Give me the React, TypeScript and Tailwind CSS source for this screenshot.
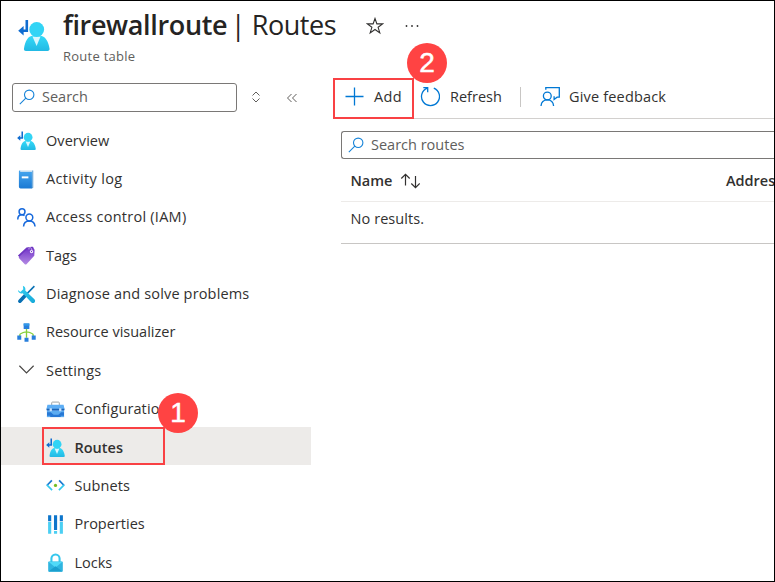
import React from "react";

type IconProps = { className?: string };

function RouteIcon({ className }: IconProps) {
  return (
    <svg viewBox="0 0 32 32" className={className} fill="none">
      <defs>
        <linearGradient id="person" x1="0" y1="0" x2="0" y2="1">
          <stop offset="0" stopColor="#35daf8" />
          <stop offset="1" stopColor="#22b9e4" />
        </linearGradient>
      </defs>
      <path d="M8.800 1v10.800H3.500" stroke="#0f6cd0" strokeWidth="2.600" />
      <path d="M5.600 7v9.600L.2 11.800z" fill="#0f6cd0" />
      <path d="M8 32a2 2 0 0 1-2-2.400C7 22 10 17 15 16.500h7c5 .5 8.500 5.500 9.500 13A2 2 0 0 1 29.500 32z" fill="url(#person)" />
      <path d="M14.500 17.500h8L18.600 27z" fill="#d8f7fe" />
      <circle cx="18.700" cy="10.500" r="7.400" fill="#32d4f5" />
    </svg>
  );
}

function SearchIcon({ className }: IconProps) {
  return (
    <svg viewBox="0 0 16 16" className={className} fill="none" stroke="#1683d8" strokeWidth="1.100">
      <circle cx="10.200" cy="5.800" r="4.700" />
      <path d="M6.800 9.200 .8 15.200" />
    </svg>
  );
}

function LogIcon() {
  return (
    <svg viewBox="0 0 20 20" className="size-[19px] shrink-0">
      <defs>
        <linearGradient id="book" x1="0" y1="0" x2="0" y2="1">
          <stop offset="0" stopColor="#46a6ef" />
          <stop offset="1" stopColor="#1b79d3" />
        </linearGradient>
      </defs>
      <path d="M3.500.500h13v18h-13z" fill="#c3dcf0" />
      <path d="M2.700.500h.8v1.700h12.200v17.300H3.800A1.800 1.800 0 0 1 2 17.700V1.500c0-.600.200-1 .7-1z" fill="url(#book)" />
      <path d="M16.600.500v18.200H15" stroke="#2f83c5" strokeWidth=".8" fill="none" />
      <path d="M5 6.700h7v2.100H5z" fill="#fff" />
    </svg>
  );
}

function PeopleIcon() {
  return (
    <svg viewBox="0 0 20 20" className="size-[19px] shrink-0" fill="none" stroke="#1769dc" strokeWidth="1.600">
      <circle cx="5.300" cy="4" r="3.100" />
      <path d="M.8 12c0-2.800 1.800-4.800 4.500-4.800 1 0 1.900.3 2.600.8" />
      <circle cx="13" cy="10" r="3.600" />
      <path d="M6.900 19.500c.2-3.500 2.700-5.800 6-5.800 3.400 0 5.800 2.300 6.100 5.800" />
    </svg>
  );
}

function TagIcon() {
  return (
    <svg viewBox="0 0 20 20" className="size-[19px] shrink-0">
      <defs>
        <linearGradient id="tag" x1="0" y1="0" x2="0" y2="1">
          <stop offset="0" stopColor="#7436c9" />
          <stop offset="1" stopColor="#b38ae3" />
        </linearGradient>
      </defs>
      <path d="m1 10 9-8.500 5.500-.7c1.300-.2 2.200.7 2 2L16 9l-8 9z" fill="#6e36c1" />
      <path d="m2.300 11.300 8.900-8.500 5.300-.2c1.300 0 2.100.8 2 2l-.3 5.600-8.200 8.900c-.6.600-1.200.6-1.800.1l-6-6.300c-.4-.5-.4-1.200.1-1.600z" fill="url(#tag)" />
      <circle cx="15.300" cy="5.800" r="1.700" fill="#fff" />
      <circle cx="15.300" cy="5.800" r=".7" fill="#7436c9" />
      <path d="M12.600 3.600c-.4-2.200 1.900-2.700 2.700-.5l.5 1.500" fill="none" stroke="#e2d3f7" strokeWidth=".8" />
    </svg>
  );
}

function ToolsIcon() {
  return (
    <svg viewBox="0 0 20 20" className="size-[19px] shrink-0" fill="none">
      <defs>
        <linearGradient id="wrench" x1="0" y1="0" x2="1" y2="1">
          <stop offset="0" stopColor="#37d2f2" />
          <stop offset="1" stopColor="#16a8d8" />
        </linearGradient>
      </defs>
      <path d="m18.300 1.200-8.500 8.700" stroke="#0870b4" strokeWidth="1.600" />
      <path d="M8.900 10.700 3 17" stroke="#0870b4" strokeWidth="3.800" strokeLinecap="round" />
      <path d="M6.200.8c2 .6 3.200 2.900 2.500 5l9.600 9.200c1 .9 1 2.400.1 3.300s-2.300.9-3.200 0L6 8.700C3.600 9.500 1.100 7.900 1 5.300l2.500 2 3.100-2.900z" fill="url(#wrench)" />
    </svg>
  );
}

function VisualizerIcon() {
  return (
    <svg viewBox="0 0 20 20" className="size-[19px] shrink-0">
      <path d="M10 6v9.500M3 14v-1.600c0-1.700 3-2.300 7-3.200 4 .9 7 1.500 7 3.200V14" fill="none" stroke="#86cf3b" strokeWidth="1.400" />
      <path d="M7 .5h6v5.800H7z" fill="#287fdc" />
      <path d="M.3 13.200h4.200v4.300H.3zM15.500 13.200h4.200v4.300h-4.200zM7.900 15.400h4.200v4.300H7.900z" fill="#287fdc" />
      <path d="M7 .5h6v2.300H7z" fill="#3399e9" />
    </svg>
  );
}

function ToolboxIcon() {
  return (
    <svg viewBox="0 0 20 20" className="size-[19px] shrink-0">
      <path d="M6 5.500V3c0-.500.300-.800.800-.800h6.400c.500 0 .800.300.800.800v2.500" fill="none" stroke="#9a9ea0" strokeWidth="1" />
      <path d="M1.500 5h17l1 4.500H.5z" fill="#5eaef5" />
      <path d="M.5 9.200h19v1.600H.5z" fill="#1b62b5" />
      <path d="M1 10.800h18V18H1z" fill="#2778d5" />
      <path d="M1 13h4l3 2.500h5l3-2.500h3v-1.500H1zM1 16.500h3.500V18H1zM15.500 16.500H19V18h-3.500z" fill="#5dacf1" />
      <path d="M3.800 8.700h2.400v3.200H3.800zM13.800 8.700h2.400v3.200h-2.400z" fill="#c5e2fc" />
    </svg>
  );
}

function SubnetsIcon() {
  return (
    <svg viewBox="0 0 20 20" className="size-[19px] shrink-0" fill="none" strokeWidth="1.800">
      <path d="M6.200 4.700.9 10" stroke="#1a79d0" />
      <path d="m.9 9.400 5.500 5.500" stroke="#35c9ef" />
      <path d="M13.800 4.700 19.100 10" stroke="#1a79d0" />
      <path d="m19.100 9.400-5.500 5.500" stroke="#35c9ef" />
      <circle cx="10" cy="9.900" r="1.700" fill="#76bd22" />
    </svg>
  );
}

function PropertiesIcon() {
  return (
    <svg viewBox="0 0 20 20" className="size-[19px] shrink-0">
      <path d="M2.200.300h3.300v6.200H2.200zM8.400.300h3.300v15.500H8.400zM14.500.300h3.300v6.200h-3.300z" fill="#0d75cb" />
      <path d="M2.200 7.300h3.300v12.400H2.200zM8.400 16.900h3.300v2.800H8.400zM14.500 7.300h3.300v12.400h-3.300z" fill="#4bcff3" />
    </svg>
  );
}

function LockIcon() {
  return (
    <svg viewBox="0 0 20 20" className="size-[19px] shrink-0">
      <path d="M5.700 10V5.800a4.300 4.300 0 0 1 8.600 0V10" fill="none" stroke="#36c7ed" strokeWidth="2.200" />
      <rect x="2.300" y="8.900" width="15.400" height="10.800" rx="1" fill="#2fb5e0" />
      <path d="m2.600 9.200 7.400 6 7.400-6z" fill="#50daf8" />
      <path d="m2.600 19.500 7.400-5.500 7.400 5.500z" fill="#1b9fce" />
    </svg>
  );
}

function MenuRow({ icon, label, track = "", nested, selected }: {
  icon: React.ReactNode; label: string; track?: string; nested?: boolean; selected?: boolean;
}) {
  return (
    <li className={`flex h-[38.360px] items-center pt-[3px] ${nested ? "gap-[9.500px] pl-[45px]" : "gap-[10px] pl-[16px]"} ${selected ? "bg-[#edebe9] font-semibold" : ""}`}>
      {icon}
      <span className={`whitespace-nowrap ${track}`}>{label}</span>
    </li>
  );
}

export default function App() {
  return (
    <div className="relative flex h-[582px] w-[775px] flex-col overflow-hidden border border-black bg-white font-['Open_Sans',sans-serif] text-[14.500px] leading-5 text-[#323130]">
      <header className="flex h-[77px] shrink-0 items-start pl-[17px]">
        <RouteIcon className="mt-[18px] size-8 shrink-0" />
        <div className="ml-[13px] mt-[4px] w-[273px] shrink-0">
          <h1 className="flex h-10 items-center whitespace-pre text-[27px] leading-10 text-[#252423]">
            <span className="font-semibold tracking-[-0.350px]">firewallroute</span>
            <span className="-ml-[3px] tracking-[-0.450px]"> | Routes</span>
          </h1>
          <p className="mt-px text-[13px] leading-5 tracking-[0.250px] text-[#605e5c]">Route table</p>
        </div>
        <svg viewBox="0 0 18 18" className="ml-[30px] mt-[16px] size-[18px]" fill="none" stroke="#323130" strokeWidth="1.100">
          <path d="m9 1.500 1.900 5.400h5.700l-4.500 3.400 1.700 5.600L9 12.500l-4.800 3.400 1.700-5.600-4.500-3.400h5.700z" />
        </svg>
        <svg viewBox="0 0 16 4" className="ml-[20px] mt-[23px] h-1 w-4" fill="#323130">
          <circle cx="2.500" cy="2" r=".9" /><circle cx="8" cy="2" r=".9" /><circle cx="13.500" cy="2" r=".9" />
        </svg>
      </header>
      <div className="flex min-h-0 flex-1">
        <aside className="w-[310px] shrink-0">
          <div className="flex h-[38px] items-center pl-[11px]">
            <div className="flex h-[29px] w-[225px] items-center gap-[7px] rounded-[3px] border border-[#7a7876] pl-[6px] text-[#605e5c]">
              <SearchIcon className="size-4" />
              <span>Search</span>
            </div>
            <svg viewBox="0 0 10 12" className="ml-[14px] h-3 w-[10px]" fill="none" stroke="#605e5c">
              <path d="m1.500 4.500 3.500-3.500 3.500 3.500M1.500 7.500 5 11l3.500-3.500" />
            </svg>
            <svg viewBox="0 0 12 10" className="ml-[25px] mt-px h-[10px] w-3" fill="none" stroke="#605e5c">
              <path d="M5.500 1 1.500 5l4 4M10.500 1l-4 4 4 4" />
            </svg>
          </div>
          <ul className="mt-[4px]">
            <MenuRow icon={<RouteIcon className="size-[19px] shrink-0" />} label="Overview" track="tracking-[0.060px]" />
            <MenuRow icon={<LogIcon />} label="Activity log" track="tracking-[0.350px]" />
            <MenuRow icon={<PeopleIcon />} label="Access control (IAM)" track="tracking-[0.250px]" />
            <MenuRow icon={<TagIcon />} label="Tags" />
            <MenuRow icon={<ToolsIcon />} label="Diagnose and solve problems" track="tracking-[0.160px]" />
            <MenuRow icon={<VisualizerIcon />} label="Resource visualizer" />
            <MenuRow icon={
              <svg viewBox="0 0 20 20" className="size-[19px] shrink-0" fill="none" stroke="#484644" strokeWidth="1.200"><path d="m2.500 5 7.500 7.500L17.500 5" /></svg>
            } label="Settings" track="tracking-[0.200px]" />
            <MenuRow nested icon={<ToolboxIcon />} label="Configuration" track="tracking-[0.120px]" />
            <MenuRow nested selected icon={<RouteIcon className="size-[19px] shrink-0" />} label="Routes" />
            <MenuRow nested icon={<SubnetsIcon />} label="Subnets" track="tracking-[0.080px]" />
            <MenuRow nested icon={<PropertiesIcon />} label="Properties" />
            <MenuRow nested icon={<LockIcon />} label="Locks" />
          </ul>
        </aside>
        <main className="min-w-0 flex-1 overflow-hidden pl-[22px]">
          <div className="flex h-[41px] items-center whitespace-nowrap border-b border-[#d2d0ce] pb-[3px] pl-[11px]">
            <svg viewBox="0 0 20 20" className="size-5" stroke="#0078d4" strokeWidth="1.300"><path d="M10.500.5v18M1.500 9.500h18" /></svg>
            <span className="ml-[10px] w-[29px] tracking-[0.300px]">Add</span>
            <svg viewBox="0 0 20 20" className="ml-[17px] size-5" fill="none" stroke="#0078d4" strokeWidth="1.300">
              <path d="M13.800 1.200a9 9 0 1 1-6.600 0" /><path d="M3.300.700h4.400v4.500" />
            </svg>
            <span className="ml-[10px] w-[52px]">Refresh</span>
            <span className="ml-[18px] h-5 w-px bg-[#c8c6c4]" />
            <svg viewBox="0 0 20 20" className="ml-[19px] size-5" fill="none" stroke="#0078d4" strokeWidth="1.300">
              <path d="M5.800 2.800V.700h13.500v9.500h-2.200l-3 2.300V9.300" />
              <circle cx="7.300" cy="9" r="3.900" />
              <path d="M1 19c.3-3.700 2.700-6.100 6.300-6.100s6 2.400 6.300 6.100" />
            </svg>
            <span className="ml-[9px] tracking-[0.170px]">Give feedback</span>
          </div>
          <div className="ml-[8px] mt-[12px]">
            <div className="flex h-7 items-center gap-[7px] rounded-l-[3px] border border-r-0 border-[#7a7876] pl-[6px] text-[#605e5c]">
              <SearchIcon className="size-4" />
              <span>Search routes</span>
            </div>
            <div className="flex h-[43px] items-center overflow-hidden whitespace-nowrap border-b border-[#edebe9] pl-[9.500px] pt-px font-semibold">
              <span className="w-[43px]">Name</span>
              <svg viewBox="0 0 20 16" className="ml-[8px] h-4 w-5 shrink-0" fill="none" stroke="#323130" strokeWidth="1.200">
                <path d="M5.500 12.500V1.500M1.300 5.500l4.200-4.200 4.200 4.200M15.500 3v11.500M11.300 10.500l4.200 4.200 4.200-4.200" />
              </svg>
              <span className="ml-[305.500px]">Address</span>
            </div>
            <div className="flex h-[42px] items-center border-b border-[#c8c6c4] pb-[8px] pl-[9.500px] tracking-[0.080px]">No results.</div>
          </div>
        </main>
      </div>
      <div className="absolute left-[332px] top-[77px] h-[41px] w-[81px] border-2 border-[#f94144]" />
      <div className="absolute left-[41px] top-[426px] h-[38px] w-[123px] border-2 border-[#f94144]" />
      <div className="absolute left-[406px] top-[42px] flex size-10 items-center justify-center rounded-full bg-[#ff4343] font-['Liberation_Sans',sans-serif] text-[28px] text-white [-webkit-text-stroke:0.500px_white]">2</div>
      <div className="absolute left-[157px] top-[392px] flex size-10 items-center justify-center rounded-full bg-[#ff4343] font-['Liberation_Sans',sans-serif] text-[28px] text-white [-webkit-text-stroke:0.500px_white]">1</div>
    </div>
  );
}
